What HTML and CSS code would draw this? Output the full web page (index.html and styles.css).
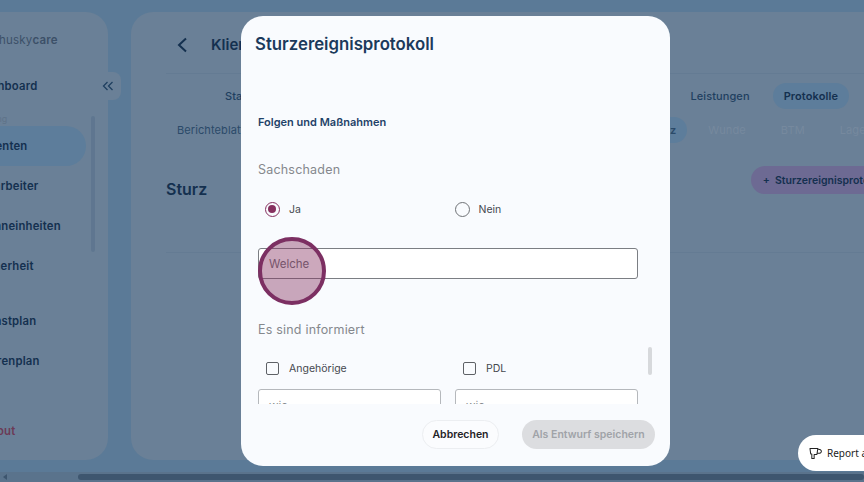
FILE: index.html
```html
<!DOCTYPE html>
<html lang="de">
<head>
  <meta charset="UTF-8" />
  <title>Sturzereignisprotokoll</title>
  <link rel="stylesheet" href="styles.css">
</head>
<body>
  <div class="page">
    <aside class="sidebar">
      <div class="logo">husky<b>care</b></div>
      <nav class="nav">
        <a class="nav-item">Dashboard</a>
        <div class="nav-label">Verwaltung</div>
        <a class="nav-item active">Patienten</a>
        <a class="nav-item">Mitarbeiter</a>
        <a class="nav-item">Wohneinheiten</a>
        <a class="nav-item">Sicherheit</a>
        <div class="nav-gap"></div>
        <a class="nav-item">Dienstplan</a>
        <a class="nav-item">Tourenplan</a>
        <div class="nav-gap wide"></div>
        <a class="nav-item logout">Logout</a>
      </nav>
      <div class="side-scroll"></div>
    </aside>
    <button class="collapse">
      <svg width="12" height="10" viewBox="0 0 12 10" fill="none" stroke="#1f3f60" stroke-width="1.3"><path d="M5.5 1 1.5 5l4 4M10.5 1l-4 4 4 4"/></svg>
    </button>

    <main class="content">
      <header class="content-head">
        <svg width="12" height="16" viewBox="0 0 12 16" fill="none" stroke="#14304f" stroke-width="2"><path d="M10 1.5 3 8l7 6.5"/></svg>
        <h2>Klientenakte</h2>
      </header>
      <div class="tabs">
        <span class="tab">Stammdaten</span>
        <span class="tab right">Leistungen</span>
        <span class="tab selected">Protokolle</span>
      </div>
      <div class="subtabs">
        <span class="subtab">Berichteblatt</span>
        <span class="subtab right selected">Sturz</span>
        <span class="subtab faded">Wunde</span>
        <span class="subtab faded">BTM</span>
        <span class="subtab faded">Lagerung</span>
      </div>
      <div class="section-head">
        <h3>Sturz</h3>
        <button class="add-btn">+&nbsp; Sturzereignisprotokoll</button>
      </div>
      <div class="divider"></div>
    </main>
  </div>

  <div class="hscroll">
    <span class="hscroll-arrow"></span>
    <div class="hscroll-thumb"></div>
  </div>

  <section class="modal">
    <h1>Sturzereignisprotokoll</h1>
    <div class="modal-body">
      <h4>Folgen und Maßnahmen</h4>
      <p class="field-label">Sachschaden</p>
      <div class="choice-row">
        <label class="choice"><span class="radio on"></span>Ja</label>
        <label class="choice"><span class="radio"></span>Nein</label>
      </div>
      <div class="text-input">Welche</div>
      <p class="field-label second">Es sind informiert</p>
      <div class="choice-row checks">
        <label class="choice"><span class="check"></span>Angehörige</label>
        <label class="choice"><span class="check"></span>PDL</label>
      </div>
      <div class="input-row">
        <div class="text-input small">wie</div>
        <div class="text-input small">wie</div>
      </div>
      <div class="modal-scroll"></div>
    </div>
    <footer class="modal-foot">
      <button class="btn-cancel">Abbrechen</button>
      <button class="btn-save">Als Entwurf speichern</button>
    </footer>
    <div class="spot"></div>
  </section>

  <div class="report">
    <svg width="14" height="13" viewBox="0 0 15 14" fill="none" stroke="#222" stroke-width="1.1" stroke-linejoin="round"><path d="M1 1.5h8.5L8.5 8H5.5v4.5H3V7.5H1.8zM9.3 2.5c2.5-.3 4 .7 4 2.2S12 7 8.8 6.7"/></svg>
    <span>Report a problem</span>
  </div>
</body>
</html>
```

FILE: styles.css
```css
* {
  box-sizing: border-box;
}
html, body {
  margin: 0;
  height: 100%;
  overflow: hidden;
}
body {
  position: relative;
  width: 864px;
  height: 482px;
  background-color: #5b7a97;
  font-family: Inter, "Noto Sans", sans-serif;
  color: #14304f;
}
.page {
  display: flex;
  gap: 23px;
  margin-left: -92px;
  padding-top: 12px;
  height: 472px;
  width: 1100px;
}

/* sidebar, scrolled partly out of view */
.sidebar {
  position: relative;
  width: 200px;
  height: 448px;
  padding: 18px 0 0 64px;
  border-radius: 22px;
  background-color: #6a8097;
  flex-shrink: 0;
}
.logo {
  margin-left: 27px;
  font-size: 11.5px;
  line-height: 20px;
  color: #3c5068;
  letter-spacing: 0.2px;
}
.logo b {
  font-weight: 600;
}
.nav {
  display: flex;
  flex-direction: column;
  margin-top: 16px;
}
.nav-item {
  height: 40px;
  width: 114px;
  padding-left: 4px;
  line-height: 40px;
  font-size: 11.3px;
  letter-spacing: 0.2px;
  font-weight: 600;
  white-space: nowrap;
  color: #14304f;
}
.nav-label {
  height: 14px;
  margin-top: 6px;
  font-size: 9px;
  line-height: 14px;
  color: #5f7389;
  text-indent: -13px;
  overflow: hidden;
  white-space: nowrap;
}
.nav-item.active {
  margin-left: -64px;
  padding-left: 66px;
  width: 178px;
  border-radius: 0 20px 20px 0;
  background-color: #5d7d9b;
}
.nav-gap {
  height: 15px;
}
.nav-gap.wide {
  height: 30px;
}
.logout {
  color: #6c3a55;
}
.side-scroll {
  position: absolute;
  left: 183px;
  top: 104px;
  width: 4px;
  height: 136px;
  border-radius: 2px;
  background-color: #5f7690;
}
.collapse {
  position: absolute;
  left: 94px;
  top: 72px;
  width: 27px;
  height: 28px;
  padding: 0;
  border: none;
  border-radius: 0 8px 8px 0;
  background-color: #6a8097;
}

/* main card behind the dialog */
.content {
  width: 800px;
  height: 448px;
  padding: 0 35px;
  border-radius: 22px;
  background-color: #6a8097;
  flex-shrink: 0;
}
.content-head {
  display: flex;
  align-items: center;
  gap: 23px;
  height: 62px;
  padding: 4px 0 0 10px;
  border-bottom: 1px solid #647b93;
}
.content-head h2 {
  margin: 0;
  font-size: 15px;
  font-weight: 600;
  color: #14304f;
}
.tabs, .subtabs {
  display: flex;
  align-items: center;
}
.tabs {
  height: 44px;
  padding-left: 48px;
}
.tab {
  font-size: 11px;
  font-weight: 500;
  padding: 6px 11px;
  border-radius: 13px;
  letter-spacing: 0.1px;
  color: #1f3f60;
}
.tab.right {
  margin-left: auto;
  margin-right: 12px;
}
.tab.selected {
  margin-right: 47px;
  font-weight: 600;
  background-color: #5d7d9b;
  color: #14304f;
}
.subtabs {
  height: 26px;
  margin-top: -1px;
  margin-right: -5px;
  gap: 13px;
}
.subtab {
  padding: 6px 11px;
  border-radius: 13px;
  font-size: 11px;
  letter-spacing: 0.1px;
  color: #2b4a69;
}
.subtab.right {
  margin-left: auto;
  margin-right: -3px;
  background-color: #5d7d9b;
  font-weight: 600;
}
.subtab.faded {
  color: #76899e;
}
.section-head {
  display: flex;
  justify-content: space-between;
  height: 28px;
  margin-top: 23px;
}
.section-head h3 {
  margin: 13px 0 0;
  font-size: 16px;
  line-height: 20px;
  font-weight: 600;
  color: #14304f;
}
.add-btn {
  height: 28px;
  margin-right: -3px;
  padding: 0 12px;
  border: none;
  border-radius: 14px;
  font-family: inherit;
  font-size: 10.5px;
  font-weight: 600;
  color: #14304f;
  background-color: #6d6a93;
}
.divider {
  height: 1px;
  margin-top: 58px;
  background-color: #647b93;
}

/* page scrollbar */
.hscroll {
  position: absolute;
  left: 0;
  bottom: 0;
  width: 864px;
  height: 10px;
  background-color: #5a738c;
}
.hscroll-arrow {
  position: absolute;
  left: 3px;
  top: 2px;
  border: 3px solid transparent;
  border-right: 4px solid #3d556e;
  border-left: 0;
}
.hscroll-thumb {
  position: absolute;
  left: 78px;
  top: 2px;
  width: 786px;
  height: 6px;
  border-radius: 3px;
  background-color: #3e566f;
}

/* dialog */
.modal {
  position: absolute;
  left: 241px;
  top: 16px;
  display: flex;
  flex-direction: column;
  width: 429px;
  height: 450px;
  border-radius: 22px;
  background-color: #f9fbfe;
}
.modal h1 {
  margin: 0;
  padding: 18px 0 0 14px;
  height: 60px;
  font-size: 16.8px;
  line-height: 21px;
  font-weight: 600;
  color: #1b3a5c;
}
.modal-body {
  position: relative;
  height: 328px;
  padding: 39px 32px 0 17px;
  overflow: hidden;
}
.modal-body h4 {
  margin: 0;
  font-size: 11px;
  line-height: 14px;
  font-weight: 600;
  color: #1f4268;
}
.field-label {
  margin: 33px 0 0;
  font-size: 12.5px;
  line-height: 16px;
  letter-spacing: 0.2px;
  color: #85888d;
}
.field-label.second {
  margin-top: 43px;
}
.choice-row {
  display: grid;
  grid-template-columns: 1fr 1fr;
  column-gap: 6px;
  margin-top: 23px;
  padding-left: 7px;
}
.choice-row.checks {
  column-gap: 22px;
  margin-top: 22px;
  padding-left: 8px;
}
.choice {
  display: flex;
  align-items: center;
  gap: 9px;
  height: 16px;
  font-size: 10.5px;
  color: #45484e;
}
.checks .choice {
  gap: 10px;
}
.radio {
  display: flex;
  width: 15px;
  height: 15px;
  padding: 2px;
  border: 1.5px solid #6f7276;
  border-radius: 50%;
}
.radio.on {
  border-color: #86305f;
}
.radio.on::after {
  content: "";
  width: 8px;
  height: 8px;
  border-radius: 50%;
  background-color: #86305f;
}
.check {
  width: 13px;
  height: 13px;
  border: 1.5px solid #5e6166;
  border-radius: 2px;
}
.text-input {
  height: 31px;
  margin-top: 31px;
  padding: 7px 10px;
  border: 1px solid #7b7e83;
  border-radius: 3px;
  background-color: #fff;
  font-size: 11.5px;
  line-height: 16px;
  color: #6b6e73;
}
.input-row {
  display: grid;
  grid-template-columns: 183px 183px;
  column-gap: 14px;
  margin-top: 13px;
}
.text-input.small {
  margin-top: 0;
  border-color: #b5b8bc;
  padding-top: 8px;
  color: #8a8d91;
}
.modal-scroll {
  position: absolute;
  right: 18px;
  top: 271px;
  width: 4px;
  height: 28px;
  border-radius: 2px;
  background-color: #d7d9dc;
}
.modal-foot {
  display: flex;
  justify-content: flex-end;
  align-items: center;
  gap: 23px;
  padding: 16px 15px 0 0;
}
.modal-foot button {
  height: 29px;
  border-radius: 15px;
  font-family: inherit;
  font-size: 10.5px;
  font-weight: 600;
}
.btn-cancel {
  width: 77px;
  padding: 0;
  border: 1px solid #eceef1;
  background-color: #fbfcfe;
  color: #1f2226;
}
.btn-save {
  width: 133px;
  padding: 0;
  border: none;
  background-color: #dcdde0;
  color: #a0a3a8;
}
/* tutorial highlight over the input */
.spot {
  position: absolute;
  left: 17px;
  top: 221px;
  width: 68px;
  height: 68px;
  border: 4px solid #7c2f62;
  border-radius: 50%;
  background-color: rgba(134, 48, 95, 0.42);
}

.report {
  position: absolute;
  left: 798px;
  top: 435px;
  display: flex;
  align-items: center;
  gap: 4px;
  width: 120px;
  height: 36px;
  padding-left: 11px;
  border-radius: 18px 0 0 18px;
  background-color: #fff;
  font-family: "Noto Sans", sans-serif;
  font-size: 10px;
  color: #222;
  white-space: nowrap;
}
```
